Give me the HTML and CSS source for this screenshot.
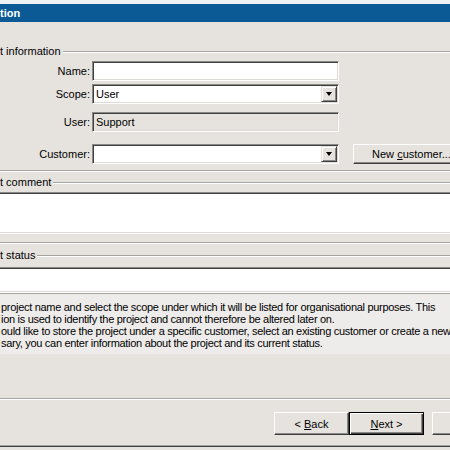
FILE: index.html
```html
<!DOCTYPE html>
<html>
<head>
<meta charset="utf-8">
<link rel="stylesheet" href="styles.css">
</head>
<body>
<div class="strip"></div>
<div class="titlebar">tion</div>

<div class="legend legend-info"><span class="legend-text">t information</span><span class="etch"></span></div>
<div class="row row-name"><label class="lbl">Name:</label><div class="field"></div></div>
<div class="row row-scope"><label class="lbl">Scope:</label><div class="field combo"><span class="val">User</span><span class="arrow"><span class="tri"></span></span></div></div>
<div class="row row-user"><label class="lbl">User:</label><div class="field disabled"><span class="val">Support</span></div></div>
<div class="row row-cust"><label class="lbl">Customer:</label><div class="field combo"><span class="val"></span><span class="arrow"><span class="tri"></span></span></div><div class="btn btn-new"><span>New <u>c</u>ustomer...</span></div></div>
<div class="etch-line etch-info"></div>

<div class="legend legend-comment"><span class="legend-text">t comment</span><span class="etch"></span></div>
<div class="textbox textbox-comment"></div>
<div class="etch-line etch-comment"></div>

<div class="legend legend-status"><span class="legend-text">t status</span><span class="etch"></span></div>
<div class="textbox textbox-status"></div>

<div class="panel">
<div class="line">project name and select the scope under which it will be listed for organisational purposes. This</div>
<div class="line">ion is used to identify the project and cannot therefore be altered later on.</div>
<div class="line">ould like to store the project under a specific customer, select an existing customer or create a new</div>
<div class="line">sary, you can enter information about the project and its current status.</div>
</div>

<div class="etch-line etch-sep"></div>
<div class="buttons">
<div class="btn btn-back"><span>&lt; <u>B</u>ack</span></div>
<div class="btn btn-next"><span><u>N</u>ext &gt;</span></div>
<div class="btn btn-cancel"></div>
</div>
<div class="bottom-line"></div>
</body>
</html>
```
FILE: styles.css
```css
html, body { margin: 0; padding: 0; }
body {
  width: 450px;
  height: 450px;
  overflow: hidden;
  background: #e6e3df;
  font-family: "Liberation Sans", Arial, sans-serif;
  font-size: 11px;
  color: #000;
}
.strip { height: 4px; background: #eef1f4; }
.titlebar {
  height: 18px;
  background: #0c5a95;
  color: #fff;
  font-weight: bold;
  font-size: 11px;
  line-height: 18px;
  white-space: nowrap;
}
.legend {
  display: flex;
  align-items: center;
  height: 13px;
  line-height: 13px;
  white-space: nowrap;
}
.legend-text { padding-right: 2px; }
.etch {
  flex: 1;
  height: 0;
  border-top: 1px solid #a6a4a0;
  border-bottom: 1px solid #fff;
}
.etch-line {
  height: 0;
  border-top: 1px solid #a6a4a0;
  border-bottom: 1px solid #fff;
}
.legend-info { margin-top: 23px; }
.row {
  display: flex;
  align-items: center;
  height: 20px;
  white-space: nowrap;
}
.row-name { margin-top: 3px; }
.row-scope { margin-top: 3px; }
.row-user { margin-top: 8px; }
.row-cust { margin-top: 12px; }
.lbl {
  box-sizing: border-box;
  flex: none;
  width: 92px;
  padding-right: 2px;
  text-align: right;
}
.field {
  box-sizing: border-box;
  flex: none;
  position: relative;
  width: 247px;
  height: 20px;
  background: #fff;
  border-top: 1px solid #8a8884;
  border-left: 1px solid #8a8884;
  border-right: 1px solid #fff;
  border-bottom: 1px solid #fff;
  box-shadow: inset 1px 1px 0 #404040, inset -1px -1px 0 #dedbd6;
  display: flex;
  align-items: center;
}
.field.disabled { background: #e6e3df; }
.val { padding-left: 3px; }
.arrow {
  position: absolute;
  right: 1px;
  top: 1px;
  box-sizing: border-box;
  width: 16px;
  height: 16px;
  background: #e6e3df;
  border-top: 1px solid #e6e3df;
  border-left: 1px solid #e6e3df;
  border-right: 1px solid #404040;
  border-bottom: 1px solid #404040;
  box-shadow: inset 1px 1px 0 #fff, inset -1px -1px 0 #8a8884;
  display: flex;
  align-items: center;
  justify-content: center;
}
.tri {
  width: 0;
  height: 0;
  border-left: 3.5px solid transparent;
  border-right: 3.5px solid transparent;
  border-top: 4px solid #000;
}
.btn {
  box-sizing: border-box;
  height: 23px;
  width: 75px;
  flex: none;
  background: #e6e3df;
  border-top: 1px solid #fff;
  border-left: 1px solid #fff;
  border-right: 1px solid #404040;
  border-bottom: 1px solid #404040;
  box-shadow: inset -1px -1px 0 #8a8884;
  display: flex;
  align-items: center;
  justify-content: center;
  white-space: nowrap;
}
.btn-new {
  margin-left: 14px;
  width: 117px;
  height: 20px;
}
.etch-info { margin-top: 6px; }
.legend-comment { margin-top: 4px; }
.textbox {
  box-sizing: border-box;
  margin-left: -10px;
  width: 480px;
  background: #fff;
  border-top: 1px solid #8a8884;
  border-bottom: 1px solid #fff;
  box-shadow: inset 0 1px 0 #404040, inset 0 -1px 0 #dedbd6;
}
.textbox-comment { margin-top: 3px; height: 42px; }
.etch-comment { margin-top: 8px; }
.legend-status { margin-top: 5px; }
.textbox-status { margin-top: 5px; height: 26px; }
.panel {
  background: #eeecea;
  border-top: 1px solid #a6a4a0;
  padding: 7px 0 5px 1px;
  white-space: nowrap;
  letter-spacing: -0.3px;
}
.line { height: 12px; line-height: 12px; }
.etch-sep { margin-top: 44px; }
.buttons {
  display: flex;
  margin-top: 12px;
  padding-left: 274px;
}
.btn-next {
  border: 1px solid #000;
  box-shadow: inset 1px 1px 0 #fff, inset -1px -1px 0 #404040, inset -2px -2px 0 #8a8884;
}
.btn-cancel { margin-left: 8px; }
.bottom-line {
  margin-top: 10px;
  height: 0;
  border-top: 1px solid #a6a4a0;
  border-bottom: 1px solid #404040;
}
```
